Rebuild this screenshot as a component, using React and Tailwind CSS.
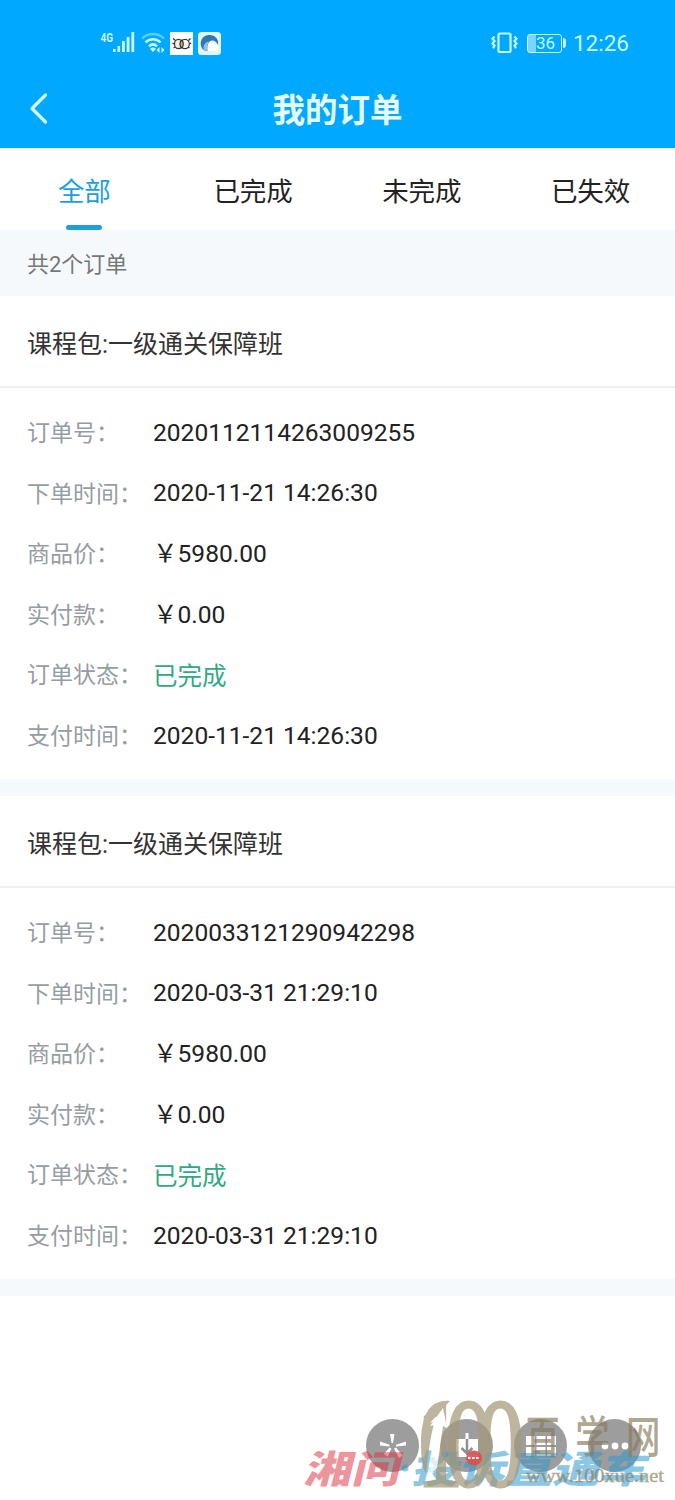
import { useState } from 'react'

const tabs = ['全部', '已完成', '未完成', '已失效']

const orders = [
  {
    id: '2020112114263009255',
    title: '课程包:一级通关保障班',
    createdAt: '2020-11-21 14:26:30',
    price: '￥5980.00',
    paid: '￥0.00',
    status: '已完成',
    paidAt: '2020-11-21 14:26:30'
  },
  {
    id: '2020033121290942298',
    title: '课程包:一级通关保障班',
    createdAt: '2020-03-31 21:29:10',
    price: '￥5980.00',
    paid: '￥0.00',
    status: '已完成',
    paidAt: '2020-03-31 21:29:10'
  }
]

function StatusBar() {
  return (
    <div className="flex h-[86px] items-center justify-between pl-[100px] pr-[46px] text-[#c5faff]">
      <div className="flex items-center">
        <svg width="36" height="26" viewBox="0 0 36 26" fill="currentColor">
          <text x="0.5" y="11.5" fontSize="12.5" fontWeight="700" textLength="12.5" lengthAdjust="spacingAndGlyphs">4G</text>
          <rect x="13" y="19" width="2.6" height="3" />
          <rect x="17.5" y="16" width="2.6" height="6" />
          <rect x="22" y="11" width="2.8" height="11" />
          <rect x="26.7" y="7" width="2.8" height="15" />
          <rect x="31.4" y="2" width="2.8" height="20" />
        </svg>
        <svg className="ml-[5px]" width="25" height="26" viewBox="0 0 25 26" fill="none" stroke="currentColor" strokeWidth="2.4">
          <path d="M1 8.5C7 2.5 17 2.5 23 8.5" opacity="0.45" />
          <path d="M4.5 12.5c4-4.3 11-4.3 15 0" />
          <path d="M8 16.3c2.5-2.4 5.5-2.4 8 0" />
          <path d="M12 22l-3-3.2c2-1.6 4-1.6 6 0z" fill="currentColor" stroke="none" />
          <path d="M18.5 17v6l-3-3zM20.5 17v6l3-3z" fill="currentColor" stroke="none" />
        </svg>
        <svg className="ml-[4px]" width="23" height="23" viewBox="0 0 23 23">
          <rect width="23" height="23" fill="#fff" />
          <g fill="none" stroke="#333" strokeWidth="1.2">
            <ellipse cx="8.5" cy="12" rx="4" ry="4.7" fill="#eee" />
            <ellipse cx="15" cy="12" rx="4.3" ry="4.7" />
            <path d="M11.8 8c-2.5 2-2.5 6 0 8c2-2 2-6 0-8z" fill="#d8b13c" />
            <path d="M3 6.5l2.5 2M20.5 6.5l-2 2M2.5 11l1.5 1M21 11l-1.5 1M3.5 16l1.5-1M19.5 16l-1.5-1" />
          </g>
        </svg>
        <svg className="ml-[5px]" width="23" height="23" viewBox="0 0 23 23">
          <rect width="23" height="23" rx="3.5" fill="#e4f4fb" />
          <path d="M5 17.5C0 11 4 3 11.5 3c6 0 9.5 4.5 8.5 10c-1.5-3.5-4-5-6.5-4.5C10 9.2 9.5 14 10.5 18.5c-2 .5-4 .3-5.5-1z" fill="#2f78b5" />
          <path d="M6 18c-1.5-4 1-8.5 5.5-8.5c-2.5 2-3 6-1 9.5z" fill="#8fc3e4" />
          <path d="M10 19c-1.5-5 0-9 3.5-9c3 0 3.5 3 3.5 3c3 0 4 2 3.5 4c-.5 1.5-2 2-3 2z" fill="#fff" />
        </svg>
      </div>
      <div className="flex items-center">
        <svg width="28" height="22" viewBox="0 0 28 22" fill="none" stroke="currentColor" strokeWidth="2.2">
          <rect x="7.5" y="1.5" width="12" height="18.5" rx="1.5" />
          <path d="M3.5 4.5l-2 2.3l2 2.3l-2 2.3l2 2.3l-1.5 2.5M23.5 4.5l2 2.3l-2 2.3l2 2.3l-2 2.3l1.5 2.5" />
        </svg>
        <div className="ml-[8px] flex items-center gap-[1px]">
          <div className="flex h-[19px] w-[35px] items-center justify-center rounded-[3px] border border-current bg-linear-to-r from-[#7cd5ff] from-25% to-transparent to-25% pl-px text-[17px] leading-none">
            36
          </div>
          <div className="h-[10px] w-[2.5px] rounded-r bg-current" />
        </div>
        <span className="ml-[7px] text-[22.5px] leading-none">12:26</span>
      </div>
    </div>
  )
}

function Header() {
  return (
    <header className="h-[148px] bg-[#00a8ff]">
      <StatusBar />
      <div className="grid h-[46px] grid-cols-[60px_1fr_60px] items-center">
        <button type="button" className="pl-[29px]" aria-label="返回">
          <svg width="20" height="34" viewBox="0 0 20 34" fill="none" stroke="#d5fbff" strokeWidth="3.2" strokeLinecap="round" strokeLinejoin="round">
            <path d="M16.5 3L3 16.5l13.5 13.5" />
          </svg>
        </button>
        <h1 className="pt-[5px] text-center text-[32.5px] font-bold leading-none text-[#e6fdff]">我的订单</h1>
      </div>
    </header>
  )
}

function Row({ label, value, valueClass = 'pt-[2px] text-[#222]' }) {
  return (
    <div className="flex h-[60.6px] items-center">
      <dt className="w-[126px] whitespace-nowrap pt-[4px] text-[23px] text-[#969da2]">{label}：</dt>
      <dd className={`text-[24.55px] ${valueClass}`}>{value}</dd>
    </div>
  )
}

function OrderCard({ order }) {
  return (
    <section className="h-[500px] border-b-[17px] border-[#f5f9fc] bg-white">
      <h2 className="flex h-[92px] items-center border-b-2 border-[#eff0f1] px-[27px] pt-[7px] text-[25px] text-[#333]">
        {order.title}
      </h2>
      <dl className="px-[27px] pt-[14px]">
        <Row label="订单号" value={order.id} />
        <Row label="下单时间" value={order.createdAt} />
        <Row label="商品价" value={order.price} />
        <Row label="实付款" value={order.paid} />
        <Row label="订单状态" value={order.status} valueClass="pt-[5px] text-[#30a982]" />
        <Row label="支付时间" value={order.paidAt} />
      </dl>
    </section>
  )
}

function FloatingTools() {
  const button = 'flex size-[53px] items-center justify-center rounded-full bg-[#9d9d9d] text-white'
  return (
    <div className="absolute bottom-[28px] left-[366px] flex gap-[21px]">
      <button type="button" className={button}>
        <svg width="30" height="30" viewBox="0 0 30 30" fill="currentColor">
          <path d="M12 3h4.5l-1.5 9h-1.5zM28 10.500v4l-10 1v-1.7zM2 10.500v4l9.5 1v-1.7zM11.5 16.5l1.8 1l-3.5 8l-4-2.5zM16 17.5l2-1l6.5 8l-3.5 2.5z" />
        </svg>
      </button>
      <button type="button" className={button}>
        <svg width="26" height="30" viewBox="0 0 26 30">
          <path d="M2 8h22v18H2z" fill="#fff" />
          <path d="M13 2v6" stroke="#fff" strokeWidth="3" />
          <path d="M13 8v14M7.5 17l5.5 5.5l5.5-5.5" fill="none" stroke="#8f8f8f" strokeWidth="2.5" />
        </svg>
      </button>
      <button type="button" className={button}>
        <svg width="30" height="20" viewBox="0 0 30 20" fill="currentColor">
          <path d="M0 0h9v9H0zM10.5 0h9v9h-9zM21 0h9v9h-9zM0 11h9v9H0zM10.5 11h9v9h-9zM21 11h9v9h-9z" />
        </svg>
      </button>
      <button type="button" className={button}>
        <svg width="28" height="8" viewBox="0 0 28 8" fill="currentColor">
          <circle cx="4" cy="4" r="3.4" />
          <circle cx="14" cy="4" r="3.4" />
          <circle cx="24" cy="4" r="3.4" />
        </svg>
      </button>
    </div>
  )
}

function Watermarks() {
  return (
    <svg className="pointer-events-none absolute bottom-0 right-0" width="375" height="150" viewBox="300 1350 375 150">
      <g fontFamily="'Noto Sans CJK SC', sans-serif" fontWeight="900" fontSize="38">
        <text transform="translate(303 1483) skewX(-14)" textLength="96" lengthAdjust="spacingAndGlyphs" fill="#dc3545" opacity="0.52">湘问</text>
        <text transform="translate(411 1483) skewX(-14)" textLength="235" lengthAdjust="spacingAndGlyphs" fill="#2f9bd3" opacity="0.55">投诉直通车</text>
        <circle cx="405" cy="1468" r="3.5" fill="#2f9bd3" opacity="0.55" />
      </g>
      <g opacity="0.72">
        <text
          transform="translate(0 1486) scale(.74 1)"
          x="563 602 645"
          fontFamily="'Liberation Serif', serif"
          fontSize="126"
          fill="#a4997a"
          stroke="#a4997a"
          strokeWidth="3"
        >
          100
        </text>
        {/* leaf and arrow on the left of the emblem */}
        <path d="M450 1401c-20-2-29 14-29 42c0 17 2 27 5 30c2-14 4-38 9-52l-5 2l13-15z" fill="#a4997a" />
        <path d="M443 1408l4 20l-4-2l-6 42l-10 10l8-53l-5 1z" fill="#fff" />
      </g>
      <ellipse cx="474" cy="1458" rx="8" ry="7.5" fill="#df4a4a" opacity="0.85" />
      <path d="M468 1458h12" stroke="#fff" strokeWidth="2" strokeDasharray="2.5 1.5" />
      <g fill="#887b5b" opacity="0.66">
        <text transform="translate(0 1453) scale(.86 1.12)" x="611 669 728" fontFamily="'Noto Sans CJK SC', sans-serif" fontSize="40" fontWeight="500">百学网</text>
        <text x="526" y="1482" fontFamily="'Liberation Serif', serif" fontSize="18" stroke="#887b5b" strokeWidth="0.4" textLength="138" lengthAdjust="spacingAndGlyphs">www.100xue.net</text>
      </g>
    </svg>
  )
}

export default function App() {
  const [active, setActive] = useState(0)

  return (
    <div className="relative h-[1500px] w-[675px] overflow-hidden bg-white font-[Roboto,'Noto_Sans_CJK_SC',sans-serif]">
      <Header />

      <nav className="grid h-[82px] grid-cols-4 bg-white">
        {tabs.map((tab, i) => (
          <button
            key={tab}
            type="button"
            onClick={() => setActive(i)}
            className={`flex flex-col items-center justify-between pt-[24px] text-[26.5px] ${
              i === active ? 'text-[#1c9fdc]' : 'text-[#222]'
            }`}
          >
            <span className="leading-[40px]">{tab}</span>
            {i === active && <span className="h-[5px] w-[36px] rounded-full bg-[#1c9fdc]" />}
          </button>
        ))}
      </nav>

      <p className="flex h-[66px] items-center bg-[#f6f9fb] px-[27px] pt-0.5 text-[22px] text-[#777]">
        共2个订单
      </p>

      {orders.map((order) => (
        <OrderCard key={order.id} order={order} />
      ))}

      <FloatingTools />
      <Watermarks />
    </div>
  )
}
